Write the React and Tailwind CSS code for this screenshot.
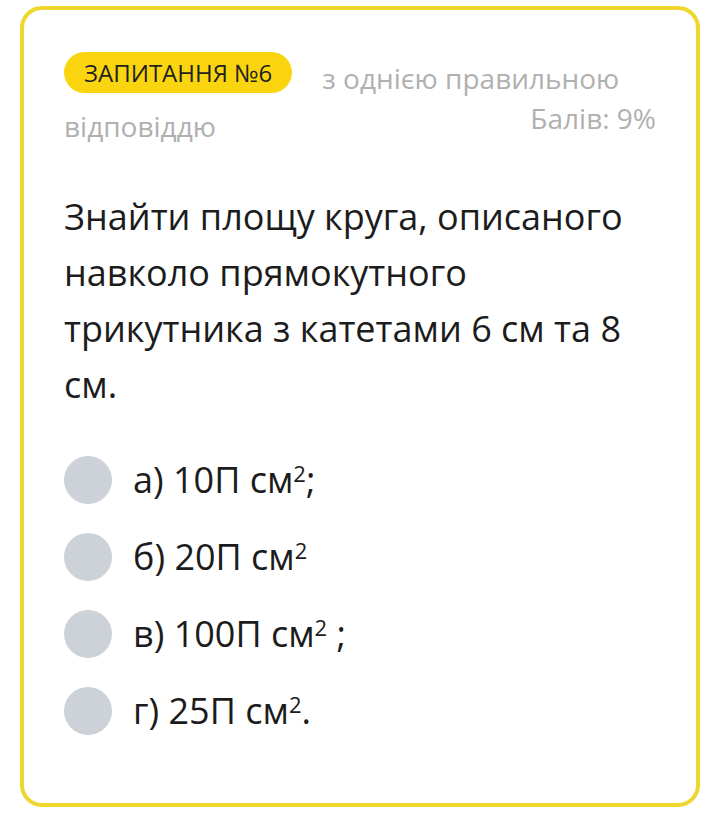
import React from 'react'

const options = [
  { id: 'a', label: 'а) 10П см', tail: ';' },
  { id: 'b', label: 'б) 20П см', tail: '' },
  { id: 'c', label: 'в) 100П см', tail: ' ;' },
  { id: 'd', label: 'г) 25П см', tail: '.' },
]

const App = () => {
  return (
    <div className="w-[712px] h-[816px] bg-white pt-[6px] pl-5 pr-3 pb-[9px]" style={{ fontFamily: '"Open Sans", "Noto Sans", sans-serif' }}>
      <div className="h-[801px] rounded-[22px] border-[4.5px] border-[#efd62c] bg-white pl-10 pr-10 pt-[42px]">
        {/* Header */}
        <div className="flex items-start">
          <span className="inline-flex h-[41px] items-center rounded-full bg-[#fad50f] px-5 text-[24px] text-[#1f1f1f]">
            ЗАПИТАННЯ №6
          </span>
          <span className="ml-[30px] mt-[5px] text-[28px] leading-[42px] text-[#b0b0b0]">з однією правильною</span>
        </div>
        <div className="mt-[6px] flex items-start justify-between">
          <span className="text-[28px] leading-[42px] text-[#b0b0b0]">відповіддю</span>
          <span className="-mt-[8px] text-[28px] leading-[42px] text-[#b0b0b0]">Балів: 9%</span>
        </div>

        {/* Question */}
        <p className="mt-[42px] w-[590px] text-[36px] leading-[56px] text-[#1c1c1c]">
          Знайти площу круга, описаного навколо прямокутного трикутника з катетами 6 см та 8 см.
        </p>

        {/* Options */}
        <div className="mt-[43px] flex flex-col gap-[29px]">
          {options.map((o) => (
            <div key={o.id} className="flex h-12 items-center">
              <span className="h-12 w-12 shrink-0 rounded-full bg-[#cdd2d9]" />
              <span className="ml-[21px] text-[36px] leading-[48px] text-[#1c1c1c]">
                {o.label}
                <sup className="text-[22px]">2</sup>
                {o.tail}
              </span>
            </div>
          ))}
        </div>
      </div>
    </div>
  )
}

export default App
